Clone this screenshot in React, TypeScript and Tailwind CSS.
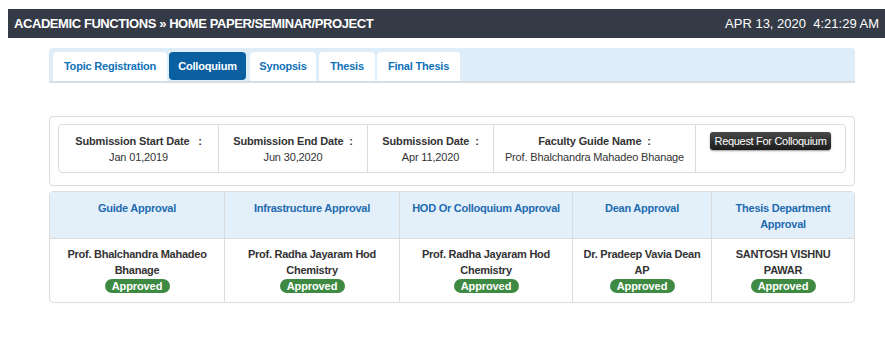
import React from "react";

const font = { fontFamily: '"Liberation Sans", Tahoma, sans-serif' };

const tabs = [
  { t: "Topic Registration", w: "w-[114px] ml-[4px]" },
  { t: "Colloquium", w: "w-[77px] ml-[2px]" },
  { t: "Synopsis", w: "w-[66px] ml-[4px]" },
  { t: "Thesis", w: "w-[56px] ml-[3px]" },
  { t: "Final Thesis", w: "w-[83px] ml-[2px]" },
];

const approvals = [
  { head: "Guide Approval", name: "Prof. Bhalchandra Mahadeo Bhanage" },
  { head: "Infrastructure Approval", name: "Prof. Radha Jayaram Hod Chemistry" },
  { head: "HOD Or Colloquium Approval", name: "Prof. Radha Jayaram Hod Chemistry" },
  { head: "Dean Approval", name: "Dr. Pradeep Vavia Dean AP" },
  { head: "Thesis Department Approval", name: "SANTOSH VISHNU PAWAR" },
];

export default function App() {
  return (
    <div className="w-[885px] h-[352px] bg-white overflow-hidden" style={font}>
      <div className="pt-[9px] pl-[8px]">
        <div className="h-[29px] bg-[#343a46] flex items-center justify-between pl-[6px] pr-[6px] text-white">
          <div className="text-[13px] font-bold tracking-[-0.42px]">ACADEMIC FUNCTIONS » HOME PAPER/SEMINAR/PROJECT</div>
          <div className="text-[13px]">APR 13, 2020&nbsp;&nbsp;4:21:29 AM</div>
        </div>
      </div>

      <div className="ml-[49px] w-[806px] mt-[10px] h-[35px] bg-[#dfedf9] rounded-t-[4px] border-b-2 border-[#d6dde3] flex items-end">
        {tabs.map(({ t, w }) => {
          const active = t === "Colloquium";
          return (
            <div
              key={t}
              className={
                w +
                (active
                  ? " h-[28px] mb-[1px] rounded-[4px] bg-[#0a5fa0] text-white text-[11px] font-bold tracking-[-0.2px] flex items-center justify-center"
                  : " h-[29px] rounded-t-[4px] bg-white text-[#0f72b9] text-[11px] font-bold tracking-[-0.2px] flex items-center justify-center")
              }
            >
              {t}
            </div>
          );
        })}
      </div>

      <div className="ml-[49px] w-[806px] mt-[33px] h-[70px] border border-[#dcdcdc] rounded-[4px] px-[8px] pt-[7px]">
        <div className="h-[49px] border border-[#dcdcdc] rounded-[4px] flex text-[11px] text-[#333] leading-[16px] tracking-[-0.15px]">
          <div className="w-[160px] border-r border-[#dcdcdc] flex flex-col items-center pt-[8px]">
            <div className="font-bold">Submission Start Date&nbsp;&nbsp;&nbsp;:</div>
            <div>Jan 01,2019</div>
          </div>
          <div className="w-[149px] border-r border-[#dcdcdc] flex flex-col items-center pt-[8px]">
            <div className="font-bold">Submission End Date&nbsp;&nbsp;:</div>
            <div>Jun 30,2020</div>
          </div>
          <div className="w-[126px] border-r border-[#dcdcdc] flex flex-col items-center pt-[8px]">
            <div className="font-bold">Submission Date&nbsp;&nbsp;:</div>
            <div>Apr 11,2020</div>
          </div>
          <div className="w-[202px] border-r border-[#dcdcdc] flex flex-col items-center pt-[8px]">
            <div className="font-bold">Faculty Guide Name&nbsp;&nbsp;:</div>
            <div>Prof. Bhalchandra Mahadeo Bhanage</div>
          </div>
          <div className="flex-1 flex justify-center pt-[7px]">
            <div className="h-[18px] w-[121px] rounded-[3px] bg-gradient-to-b from-[#4a4a4a] to-[#1c1c1c] text-white text-[11px] tracking-[-0.3px] flex items-center justify-center shadow-[0_1px_2px_rgba(0,0,0,0.4)]">
              Request For Colloquium
            </div>
          </div>
        </div>
      </div>

      <div className="ml-[49px] w-[806px] mt-[5px] border border-[#dcdcdc] rounded-[4px] overflow-hidden">
        <div className="grid grid-cols-[175px_175px_173px_139px_1fr] text-[11px] font-bold tracking-[-0.25px]">
          {approvals.map((a, i) => (
            <div
              key={a.head}
              className={
                "h-[47px] bg-[#e3f0fa] text-[#1f6bb0] border-b border-[#dcdcdc] text-center px-[10px] pt-[8px] leading-[16px]" +
                (i < 4 ? " border-r" : "")
              }
            >
              {a.head}
            </div>
          ))}
          {approvals.map((a, i) => (
            <div
              key={a.name + i}
              className={
                "h-[63px] text-[#333] text-center px-[8px] pt-[7px] leading-[16px] flex flex-col items-center border-[#dcdcdc]" +
                (i < 4 ? " border-r" : "")
              }
            >
              <div>{a.name}</div>
              <div className="mt-[1px] w-[65px] h-[14px] rounded-full bg-[#3f8a43] text-white text-[11px] leading-[14px] tracking-[-0.1px]">
                Approved
              </div>
            </div>
          ))}
        </div>
      </div>
    </div>
  );
}
